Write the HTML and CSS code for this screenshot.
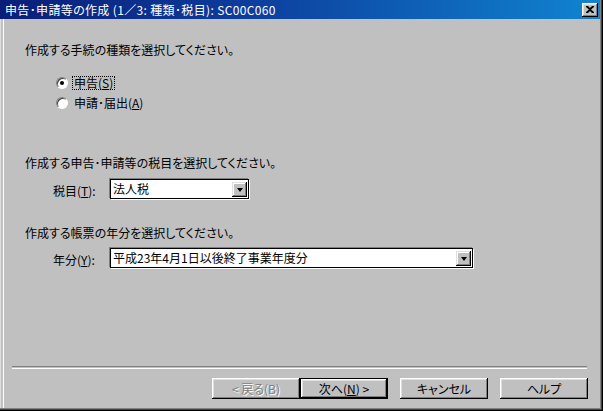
FILE: index.html
```html
<!DOCTYPE html>
<html lang="ja">
<head>
<meta charset="utf-8">
<title>SC00C060</title>
<link rel="stylesheet" href="styles.css">
</head>
<body>
<div class="window">
  <div class="titlebar">
    <span class="title">申告･申請等の作成 (1／3: 種類･税目): SC00C060</span>
    <span class="close"><svg width="8" height="7" viewBox="0 0 8 7"><path d="M0 0h2l2 2 2-2h2v1L5 3.5 8 6v1H6L4 5 2 7H0V6l3-2.5L0 1z" fill="#000"/></svg></span>
  </div>
  <div class="client">
    <p class="q q1">作成する手続の種類を選択してください。</p>
    <div class="radios">
      <div class="radio"><span class="rb checked"></span><span class="rl focus">申告(<u>S</u>)</span></div>
      <div class="radio"><span class="rb"></span><span class="rl">申請･届出(<u>A</u>)</span></div>
    </div>
    <p class="q q2">作成する申告･申請等の税目を選択してください。</p>
    <div class="field f1">
      <span class="flabel">税目(<u>T</u>):</span>
      <div class="combo c-short"><span class="val">法人税</span><span class="dd"><span class="tri"></span></span></div>
    </div>
    <p class="q q3">作成する帳票の年分を選択してください。</p>
    <div class="field f2">
      <span class="flabel">年分(<u>Y</u>):</span>
      <div class="combo c-long"><span class="val">平成23年4月1日以後終了事業年度分</span><span class="dd"><span class="tri"></span></span></div>
    </div>
    <div class="sep"></div>
    <div class="buttons">
      <span class="btn disabled">&lt; 戻る(B)</span>
      <span class="btn default">次へ(<u>N</u>) &gt;</span>
      <span class="btn gap">キャンセル</span>
      <span class="btn gap">ヘルプ</span>
    </div>
  </div>
</div>
</body>
</html>
```

FILE: styles.css
```css
html, body {
  margin: 0;
  padding: 0;
  background: #c0c0c0;
}

body {
  font-family: "Noto Sans CJK JP", "Noto Sans", sans-serif;
  font-size: 12px;
  font-feature-settings: "palt";
  color: #000;
}

.window {
  width: 603px;
  height: 411px;
  box-sizing: border-box;
  background: #c0c0c0;
  box-shadow: inset -1px -1px #000, inset -2px -2px #404040, inset -3px -3px #808080, inset 1px 0 #dfdfdf;
  display: flex;
  flex-direction: column;
  overflow: hidden;
}

.titlebar {
  width: 600px;
  height: 19px;
  flex: none;
  background: linear-gradient(to right, #0a1e78 0%, #0c3c9c 40%, #1084d0 100%);
  display: flex;
  align-items: center;
  justify-content: space-between;
  color: #fff;
}

.title {
  padding-left: 5px;
  line-height: 19px;
  white-space: nowrap;
  letter-spacing: 0.35px;
}

.close {
  width: 16px;
  height: 14px;
  margin-right: 2px;
  box-sizing: border-box;
  background: #c0c0c0;
  box-shadow: inset -1px -1px #000, inset 1px 1px #fff, inset -2px -2px #808080, inset 2px 2px #dfdfdf;
  display: flex;
  align-items: center;
  justify-content: center;
}

.close svg {
  display: block;
  margin-left: -1px;
}

.client {
  flex: 1;
  margin-left: 3px;
  margin-bottom: 3px;
  border-left: 1px solid #fff;
  display: flex;
  flex-direction: column;
}

.q {
  margin: 0;
  line-height: 14px;
  height: 14px;
  padding-left: 21px;
  white-space: nowrap;
}

.q1 { margin-top: 24px; }
.q2 { margin-top: 43px; }
.q3 { margin-top: 27px; }

.radios {
  margin-top: 16px;
  padding-left: 52px;
}

.radio {
  height: 20px;
  display: flex;
  align-items: center;
}

.rb {
  width: 12px;
  height: 12px;
  box-sizing: border-box;
  border-radius: 50%;
  border: 1px solid;
  border-color: #808080 #fff #fff #808080;
  background: #fff;
  box-shadow: inset 1px 1px #404040;
  display: flex;
  align-items: center;
  justify-content: center;
  flex: none;
}

.rb.checked::after {
  content: "";
  width: 4px;
  height: 4px;
  border-radius: 50%;
  background: #000;
}

.rl {
  margin-left: 4px;
  line-height: 12px;
  padding: 0 1px;
  border: 1px solid transparent;
  white-space: nowrap;
}

.rl.focus {
  border: 1px dotted #000;
}

.field {
  display: flex;
  align-items: center;
  height: 20px;
}

.f1 { margin-top: 9px; }
.f2 { margin-top: 8px; }

.flabel {
  width: 57px;
  padding-left: 49px;
  padding-top: 2px;
  white-space: nowrap;
  flex: none;
}

.combo {
  height: 20px;
  box-sizing: border-box;
  background: #fff;
  border: 1px solid #000;
  box-shadow: -1px -1px #808080, 1px 1px #fff;
  display: flex;
  align-items: center;
  justify-content: space-between;
  padding-left: 2px;
  padding-right: 1px;
}

.c-short { width: 139px; }
.c-long { width: 363px; }

.val {
  white-space: nowrap;
  line-height: 16px;
}

.dd {
  width: 15px;
  height: 15px;
  box-sizing: border-box;
  background: #c0c0c0;
  box-shadow: inset -1px -1px #000, inset 1px 1px #dfdfdf, inset -2px -2px #808080, inset 2px 2px #fff;
  display: flex;
  align-items: center;
  justify-content: center;
}

.tri {
  width: 0;
  height: 0;
  border-left: 3.5px solid transparent;
  border-right: 3.5px solid transparent;
  border-top: 4px solid #000;
  margin-top: 1px;
}

.sep {
  margin-top: 98px;
  margin-left: 8px;
  width: 575px;
  height: 1px;
  border-top: 1px solid #808080;
  border-bottom: 1px solid #fff;
  flex: none;
}

.buttons {
  margin-top: 9px;
  display: flex;
  justify-content: flex-end;
  padding-right: 15px;
}

.btn {
  width: 88px;
  height: 21px;
  box-sizing: border-box;
  background: #c0c0c0;
  box-shadow: inset -1px -1px #000, inset 1px 1px #fff, inset -2px -2px #808080, inset 2px 2px #dfdfdf;
  display: flex;
  align-items: center;
  justify-content: center;
  white-space: nowrap;
  line-height: 14px;
}

.btn.default {
  border: 1px solid #000;
}

.btn.disabled {
  color: #808080;
  text-shadow: 1px 1px #fff;
}

.btn.gap {
  margin-left: 12px;
}

u {
  text-decoration: underline;
  text-underline-offset: 1px;
}
```
